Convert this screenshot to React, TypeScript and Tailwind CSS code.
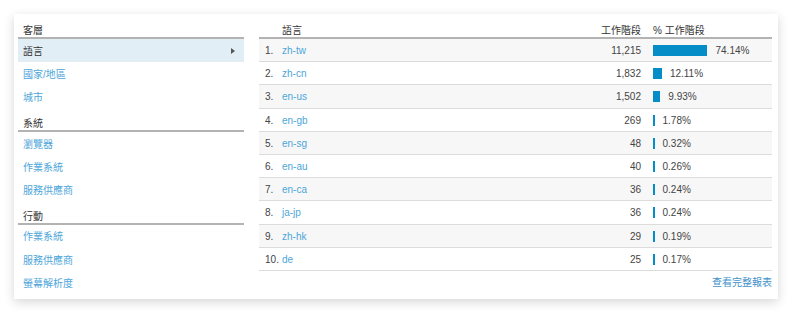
import React from 'react'

// Panel de "Idioma" estilo Analytics: menú de dimensiones a la izquierda, tabla a la derecha

interface NavSection {
  title: string
  items: string[]
}

const NAV: NavSection[] = [
  { title: '客層', items: ['語言', '國家/地區', '城市'] },
  { title: '系統', items: ['瀏覽器', '作業系統', '服務供應商'] },
  { title: '行動', items: ['作業系統', '服務供應商', '螢幕解析度'] },
]

const ROWS: [string, string, number][] = [
  ['zh-tw', '11,215', 74.14],
  ['zh-cn', '1,832', 12.11],
  ['en-us', '1,502', 9.93],
  ['en-gb', '269', 1.78],
  ['en-sg', '48', 0.32],
  ['en-au', '40', 0.26],
  ['en-ca', '36', 0.24],
  ['ja-jp', '36', 0.24],
  ['zh-hk', '29', 0.19],
  ['de', '25', 0.17],
]

const FONT = '[font-family:"Liberation_Sans","Noto_Sans_CJK_TC",Arial,sans-serif]'

function barWidth(pct: number): number {
  return Math.max(1.5, pct * 0.735)
}

export default function App() {
  return (
    <div className={`w-[800px] h-[321px] bg-white pt-[14px] pl-[14px] ${FONT} text-[10px] text-[#333]`}>
      <div className="w-[764px] h-[285px] bg-white shadow-[0_3px_10px_rgba(0,0,0,0.16)] flex pl-[4px] pr-[6px]">
        {/* Menú izquierdo */}
        <div className="w-[226px] flex flex-col">
          {NAV.map((sec, si) => (
            <div key={si} className="flex flex-col">
              <div
                className={`${
                  si === 0 ? 'h-[25px]' : 'h-[23px]'
                } flex items-end pl-[5px] leading-[12px] border-b-2 border-[#b3b3b3] text-[#333]`}
              >
                {sec.title}
              </div>
              {sec.items.map((it, i) => {
                const active = si === 0 && i === 0
                return (
                  <div
                    key={i}
                    className={`h-[23.3px] flex items-center justify-between pt-[1px] pl-[5px] pr-[9px] ${
                      active ? 'bg-[#e2eef6] text-[#333]' : 'text-[#4da6da]'
                    }`}
                  >
                    <span>{it}</span>
                    {active && (
                      <span className="w-0 h-0 border-y-[3px] border-y-transparent border-l-[4px] border-l-[#555]" />
                    )}
                  </div>
                )
              })}
            </div>
          ))}
        </div>

        {/* Tabla */}
        <div className="ml-[15px] w-[513px] flex flex-col">
          <div className="h-[25px] flex items-end leading-[12px] border-b-2 border-[#b3b3b3]">
            <div className="w-[23px]" />
            <div className="flex-1">語言</div>
            <div className="w-[80px] text-right">工作階段</div>
            <div className="w-[131px] pl-[12px]">% 工作階段</div>
          </div>
          {ROWS.map(([lang, sessions, pct], i) => (
            <div
              key={lang}
              className={`h-[23.2px] flex items-center pt-[1px] border-b border-[#dcdcdc] ${
                i % 2 === 0 ? 'bg-[#f7f7f7]' : 'bg-white'
              }`}
            >
              <div className="w-[23px] pl-[6px] text-[#444]">{i + 1}.</div>
              <div className="flex-1 text-[#4da6da]">{lang}</div>
              <div className="w-[80px] text-right text-[#444]">{sessions}</div>
              <div className="w-[131px] pl-[12px] flex items-center gap-[8px]">
                <div className="h-[11px] bg-[#058dc7]" style={{ width: barWidth(pct) }} />
                <span className="text-[#444]">{pct.toFixed(2)}%</span>
              </div>
            </div>
          ))}
          <div className="h-[23px] flex items-center justify-end text-[#3f92cc]">查看完整報表</div>
        </div>
      </div>
    </div>
  )
}
